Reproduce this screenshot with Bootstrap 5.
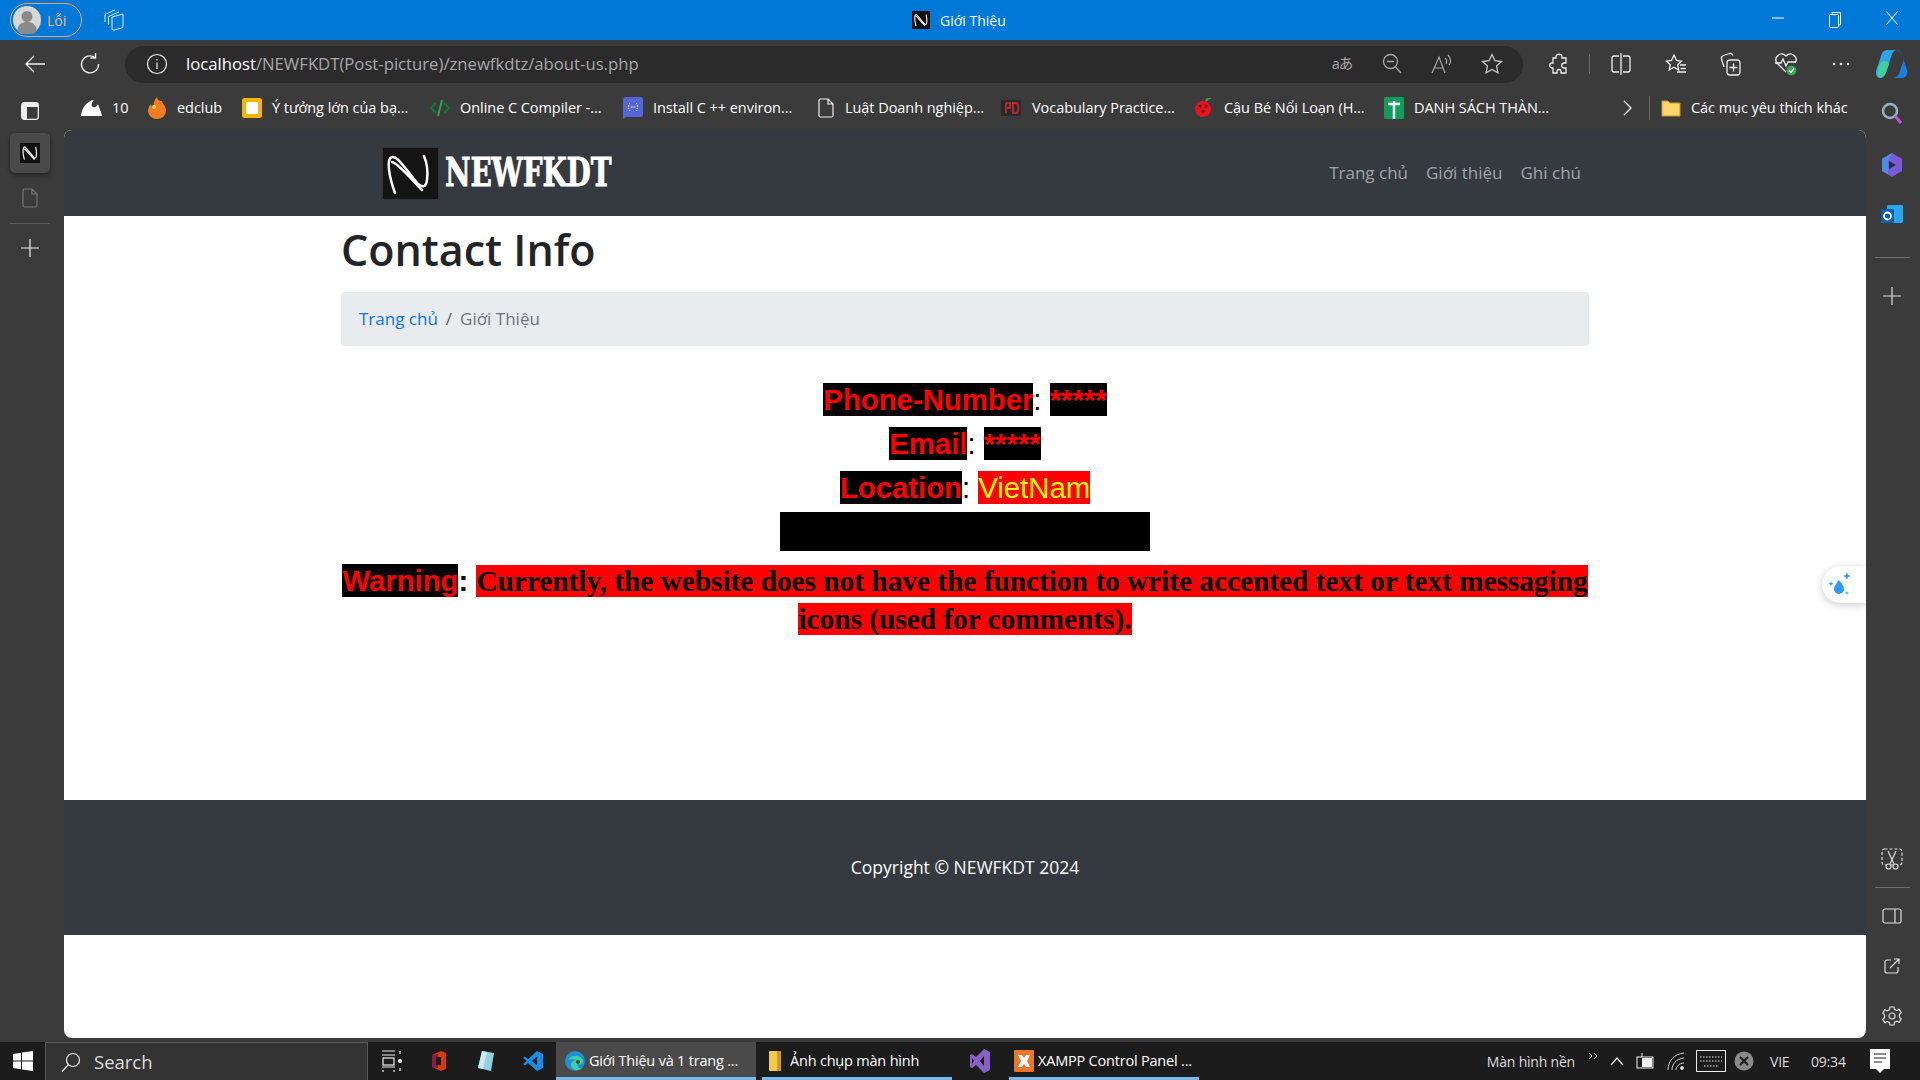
<!DOCTYPE html>
<html lang="vi">

<head>
    <meta charset="utf-8">
    <title>Giới Thiệu</title>
    <link rel="stylesheet" href="https://cdn.jsdelivr.net/npm/bootstrap@5.3.3/dist/css/bootstrap.min.css" />
    <style>
        html, body { height: 100%; overflow: hidden; }
        body { font-family: "Open Sans", "Noto Sans", sans-serif; background: #3b3b3b; color: #fff; }
        svg { display: block; flex: none; }
        .shell { height: 1080px; }

        /* window title */
        .titlebar { height: 40px; background: #0078d7; position: relative; }
        .profile-pill { width: 72px; height: 34px; margin-left: 10px; border: 1px solid #f0a35e; border-radius: 17px; color: #f5b27a; font-size: 14px; gap: 6px; padding-left: 2px; }
        .stack-icon { margin-left: 21px; }
        .title-center { position: absolute; left: 912px; top: 0; height: 40px; font-size: 14px; gap: 10px; }
        .win-btn { width: 57px; }

        /* toolbar */
        .toolbar { height: 48px; padding-left: 7px; }
        .tool-slot { width: 55px; height: 37px; }
        .addr-pill { width: 1398px; height: 37px; margin-left: 8px; margin-right: 8px; background: #2b2b2b; border-radius: 19px; padding: 0 6px 0 20px; font-size: 16.7px; }
        .addr-host { color: #fff; }
        .addr-path { color: #a8a8a8; }
        .addr-text { margin-left: 17px; }
        .addr-slot { width: 50px; }
        .translate-glyph { color: #a8a8a8; font-family: "Open Sans", "Noto Sans CJK JP", sans-serif; font-size: 14.5px; letter-spacing: -1px; }
        .tool-sep { width: 1px; height: 20px; background: #6a6a6a; margin: 0 3px; }
        .copilot-cell { margin-left: 8px; }

        /* middle */
        .mid-row { height: 954px; }
        .side-left { width: 64px; padding: 14px 4px 0 0; }
        .side-tile { width: 40px; height: 40px; background: #4a4a4a; border-radius: 5px; margin: 13px 0 15px; box-shadow: 0 2px 5px rgba(0, 0, 0, .4); }
        .side-rule-l { width: 40px; height: 1px; background: #5c5c5c; margin: 15px 0 15px; }
        .center-col { width: 1802px; }
        .side-right { width: 54px; padding: 14px 2px 16px 0; }
        .side-rule-r { width: 35px; height: 1px; background: #6e6e6e; }
        .rail-copilot { margin-top: 27px; }
        .rail-outlook { margin-top: 27px; }
        .rail-rule-a { margin-top: 31px; }
        .rail-plus { margin-top: 29px; }
        .rail-rule-b { margin: 17px 0 20px; }
        .rail-out { margin-top: 34px; }
        .rail-gear { margin-top: 32px; }

        .bookmarks { height: 42px; padding-bottom: 2px; display: grid; grid-template-columns: 16px 67px 95px 188px 193px 194px 183px 194px 190px 239px 26px 12px 1fr; font-size: 14.5px; letter-spacing: -.05px; align-items: center; }
        .mark-item { gap: 10px; white-space: nowrap; overflow: hidden; }
        .mark-rule { width: 1px; height: 24px; background: #666; }

        /* page inside the browser */
        .web-page { width: 1802px; height: 908px; background: #fff; border-radius: 8px; overflow: hidden; position: relative; color: #212529; }
        .site-bar { height: 86px; background: #343a40; padding: 0 285px 0 318px; }
        .logo-word { display: inline-block; font-family: "DejaVu Serif", serif; font-weight: 700; font-size: 28px; color: #fff; margin-left: 6px; letter-spacing: -.2px; line-height: 1; transform: scaleY(1.4); -webkit-text-stroke: .6px #fff; }
        .site-link { color: rgba(255, 255, 255, .55); font-size: 17px; margin-left: 18px; text-decoration: none; }
        .page-main { height: 584px; width: 1248px; margin-left: 277px; }
        .page-title { font-size: 43px; font-weight: 600; line-height: 1.2; padding-top: 8px; margin: 0 0 16px; color: #212529; }
        .crumb-box { height: 54px; background: #e9ecef; border-radius: 4px; padding: 0 18px; font-size: 17px; }
        .crumb-box .breadcrumb { margin: 0; }
        .crumb-box a { color: #0d6efd; text-decoration: none; }
        .crumb-box .breadcrumb-item.active { color: #6c757d; }
        .contact-info { margin-top: 32px; text-align: center; font-family: "Liberation Sans", Arial, sans-serif; font-size: 29.3px; font-weight: 700; color: #000; }
        .info-line { line-height: 44px; height: 44px; }
        .lab-black { background: #000; color: #f00; }
        .lab-star { background: #000; color: #f00; }
        .lab-place { background: #f00; color: #ff0; font-weight: 400; }
        .sep-colon { font-weight: 400; }
        .black-box { width: 370px; height: 39px; background: #000; margin: 2px auto 11px; }
        .warn-line { line-height: 38px; margin: 0 -4px; }
        .warn-text { background: #f00; color: #000; font-family: "Liberation Serif", "Times New Roman", serif; }
        .site-foot { height: 135px; background: #343a40; color: #fff; font-size: 17.5px; }
        .drop-float { position: absolute; right: 0; top: 436px; width: 44px; height: 37px; background: #fff; border-radius: 19px 0 0 19px; box-shadow: 0 2px 8px rgba(0, 0, 0, .2); padding-left: 5px; }

        /* taskbar */
        .taskbar { height: 38px; background: #1c1c1c; font-size: 14.5px; letter-spacing: -.2px; }
        .start-cell { width: 45px; }
        .search-cell { width: 323px; height: 38px; background: #333; border: 1px solid #5a5a5a; border-bottom: 0; padding-left: 15px; gap: 13px; color: #ddd; font-size: 18.5px; letter-spacing: 0; }
        .task-cell { height: 38px; border-bottom: 3px solid #76b9ed; padding-top: 3px; gap: 4px; white-space: nowrap; }
        .task-edge { width: 200px; background: #4a4a4a; padding-left: 9px; }
        .task-files { width: 190px; margin-left: 6px; padding-left: 7px; gap: 9px; }
        .task-vs { margin: 0 19px 0 18px; }
        .task-xampp { width: 190px; padding-left: 5px; }
        .icon-cell { width: 47px; height: 38px; }
        .tray { margin-left: auto; color: #ddd; font-size: 14px; padding-right: 6px; }
        .tray-g12 { margin-right: 12px; }
        .tray-g11 { margin-right: 11px; }
        .tray-g10 { margin-right: 10px; }
        .tray-vie { width: 41px; }
        .tray-time { width: 59px; }
    </style>
</head>

<body>
    <div class="shell d-flex flex-column">
        <!-- title bar -->
        <div class="titlebar d-flex align-items-center">
            <div class="profile-pill d-flex align-items-center">
                <svg width="28" height="28" viewBox="0 0 28 28"><circle cx="14" cy="14" r="14" fill="#d6d6d6"/><circle cx="14" cy="10.5" r="5.5" fill="#8a8a8a"/><path d="M4 25c1-7 5-9 10-9s9 2 10 9a14 14 0 0 1-20 0z" fill="#8a8a8a"/></svg>
                <span>Lỗi</span>
            </div>
            <svg class="stack-icon" width="22" height="22" viewBox="0 0 22 22" fill="none" stroke="#dcecf9" stroke-width="1"><path d="M9 8l11-3v12c0 1-.5 1.500-1.500 2L11 21c-1.200.3-2-.3-2-1.500z"/><path d="M5.500 16V7.500L16 3M2 13V5.500L12 1"/></svg>
            <div class="title-center d-flex align-items-center">
                <svg width="18" height="18" viewBox="0 0 18 18"><rect width="18" height="18" fill="#111"/><path d="M4 15C2 8 2.500 3.500 4.500 3.500l8.500 10c2 1 2.500-5 1-10M4 5l9 10" fill="none" stroke="#fff" stroke-width="1.100"/></svg>
                <span>Giới Thiệu</span>
            </div>
            <div class="ms-auto d-flex">
                <div class="win-btn d-flex justify-content-center"><svg width="14" height="14" viewBox="0 0 14 14"><path d="M1 7h12" stroke="#fff"/></svg></div>
                <div class="win-btn d-flex justify-content-center"><svg width="14" height="18" viewBox="0 0 14 18" fill="none" stroke="#fff"><rect x="1.5" y="3.5" width="9" height="13" rx="1"/><path d="M4 3V1.5h8.5V14H11"/></svg></div>
                <div class="win-btn d-flex justify-content-center"><svg width="14" height="14" viewBox="0 0 14 14"><path d="M1 0l12 14M13 0L1 14" stroke="#fff"/></svg></div>
            </div>
        </div>

        <!-- toolbar -->
        <div class="toolbar d-flex align-items-center">
            <div class="tool-slot d-flex align-items-center justify-content-center"><svg width="22" height="20" viewBox="0 0 22 20" fill="none" stroke="#eee" stroke-width="1.4"><path d="M21 10H2M10 2l-8 8 8 8"/></svg></div>
            <div class="tool-slot d-flex align-items-center justify-content-center"><svg width="20" height="22" viewBox="0 0 20 22" fill="none" stroke="#eee" stroke-width="1.4"><path d="M15 4.500A8.500 8.500 0 1 0 18.500 11"/><path d="M15.500 0v5h-5"/></svg></div>
            <div class="addr-pill d-flex align-items-center">
                <svg width="24" height="22" viewBox="0 0 24 22" fill="none" stroke="#eee" stroke-width="1.2"><circle cx="12" cy="11" r="9.500"/><path d="M12 9.500V16M12 6v1.500"/></svg>
                <div class="addr-text"><span class="addr-host">localhost</span><span class="addr-path">/NEWFKDT(Post-picture)/znewfkdtz/about-us.php</span></div>
                <div class="ms-auto d-flex align-items-center">
                    <div class="addr-slot d-flex justify-content-center translate-glyph">aあ</div>
                    <div class="addr-slot d-flex justify-content-center"><svg width="20" height="22" viewBox="0 0 20 22" fill="none" stroke="#a8a8a8" stroke-width="1.3"><circle cx="8.500" cy="8.500" r="7"/><path d="M13.500 14l5.500 6M5 8.500h7"/></svg></div>
                    <div class="addr-slot d-flex justify-content-center"><svg width="22" height="20" viewBox="0 0 22 20" fill="none" stroke="#a8a8a8" stroke-width="1.2"><path d="M1 19L8 3l6 16M3.500 14h8.500M14 4c2 1 2 4 1 6M17 1c3 3 3 7 1 10"/></svg></div>
                    <div class="addr-slot d-flex justify-content-center"><svg width="22" height="22" viewBox="0 0 22 22" fill="none" stroke="#c8c8c8" stroke-width="1.3"><path d="M11 1.500l2.900 6.200 6.600.8-4.900 4.600 1.300 6.700L11 16.500l-5.900 3.300 1.300-6.700L1.500 8.500l6.600-.8z"/></svg></div>
                </div>
            </div>
            <div class="tool-slot d-flex align-items-center justify-content-center"><svg width="20" height="22" viewBox="0 0 20 22" fill="none" stroke="#eee" stroke-width="1.3"><path d="M7 3.500c0-3 6-3 6 0V5h4v5h-2c-3 0-3 5 0 5h2v5h-5v-2c0-2-4-2-4 0v2H4v-5H3c-3 0-3-5 0-5h1V5h3z"/></svg></div>
            <div class="tool-sep"></div>
            <div class="tool-slot d-flex align-items-center justify-content-center"><svg width="20" height="22" viewBox="0 0 20 22" fill="none" stroke="#eee" stroke-width="1.3"><path d="M8 3H3a2 2 0 0 0-2 2v12a2 2 0 0 0 2 2h5M12 3h5a2 2 0 0 1 2 2v12a2 2 0 0 1-2 2h-5M10 0v22"/></svg></div>
            <div class="tool-slot d-flex align-items-center justify-content-center"><svg width="22" height="22" viewBox="0 0 22 22" fill="none" stroke="#eee" stroke-width="1.3"><path d="M9 2l2.500 5.500 5 .7-3.800 3.500 1 5.300L9 14.200l-4.700 2.800 1-5.300L1.500 8.200l5-.7zM15 12h6M15.500 15.500H21M12 19h9"/></svg></div>
            <div class="tool-slot d-flex align-items-center justify-content-center"><svg width="22" height="24" viewBox="0 0 22 24" fill="none" stroke="#eee" stroke-width="1.3"><path d="M4 15L1.500 7c-.5-2 .5-3 2-3.500l6-2c2-.5 3 .5 3.500 2"/><rect x="7" y="8" width="13" height="15" rx="3"/><path d="M13.500 11.500v8M9.500 15.500h8"/></svg></div>
            <div class="tool-slot d-flex align-items-center justify-content-center"><svg width="24" height="26" viewBox="0 0 24 26" fill="none" stroke="#eee" stroke-width="1.3"><path d="M12 21L3 12C-1 6 7 0 12 5c5-5 13 1 9 7"/><path d="M1 12h6l2-4 3 7 2-4h8"/><circle cx="17.500" cy="19.500" r="5" fill="#3aa655" stroke="none"/><path d="M15 19.500l2 2 3-4" stroke="#fff"/></svg></div>
            <div class="tool-slot d-flex align-items-center justify-content-center"><svg width="18" height="4" viewBox="0 0 18 4" fill="#eee"><circle cx="2" cy="2" r="1.300"/><circle cx="9" cy="2" r="1.300"/><circle cx="16" cy="2" r="1.300"/></svg></div>
            <div class="copilot-cell d-flex align-items-center"><svg width="32" height="28" viewBox="0 0 32 28"><path d="M12 0h8c-3 1-4 4-5 7l-4 13c-1 4-3 7-7 8-3 0-5-3-4-7l5-15c1-4 3-6 7-6z" fill="#2aa6e6"/><path d="M2 20c0-5 3-9 7-9 2 0 3 1 4 3l-3 8c-1 3-3 6-6 6-2-1-3-4-2-8z" fill="#3fd0a0"/><path d="M20 0c3 0 5 2 6 5l5 15c1 4-1 8-5 8h-8c3-1 5-3 6-7l3-9c1-5-2-11-7-12z" fill="#1b7fe0"/></svg></div>
        </div>

        <!-- left rail, bookmarks + page, right rail -->
        <div class="mid-row d-flex">
            <div class="side-left d-flex flex-column align-items-center">
                <svg width="18" height="18" viewBox="0 0 18 18"><rect x=".7" y=".7" width="16.600" height="16.600" rx="2.500" fill="none" stroke="#eee" stroke-width="1.300"/><rect x="1" y="1" width="16" height="4" fill="#eee"/><rect x="1" y="5" width="5" height="12" fill="#eee"/></svg>
                <div class="side-tile d-flex align-items-center justify-content-center">
                    <svg width="20" height="20" viewBox="0 0 18 18"><rect width="18" height="18" fill="#111"/><path d="M4 15C2 8 2.500 3.500 4.500 3.500l8.500 10c2 1 2.500-5 1-10M4 5l9 10" fill="none" stroke="#eee" stroke-width="1.100"/></svg>
                </div>
                <svg width="16" height="20" viewBox="0 0 16 20" fill="none" stroke="#777" stroke-width="1.200"><path d="M2.500 1H10l5 5v11.500a1.500 1.500 0 0 1-1.500 1.500h-11A1.500 1.500 0 0 1 1 17.500v-15A1.500 1.500 0 0 1 2.500 1zM10 1v5h5"/></svg>
                <div class="side-rule-l"></div>
                <svg width="18" height="18" viewBox="0 0 18 18"><path d="M0 9h18M9 0v18" stroke="#eee" stroke-width="1.200"/></svg>
            </div>

            <div class="center-col">
                <div class="bookmarks">
                    <div></div>
                    <div class="mark-item d-flex align-items-center"><svg width="22" height="18" viewBox="0 0 22 18"><path d="M1 17C2 8 7 2 14 1c-3 3-3 6-1 7 2 1 4-1 5-3 1 4 3 7 4 12z" fill="#fff"/></svg><span>10</span></div>
                    <div class="mark-item d-flex align-items-center"><svg width="20" height="22" viewBox="0 0 20 22"><path d="M10 0c1 4 3 4 5 4 0 2 4 5 4 10a9 8 0 0 1-18 0C1 10 3 8 4 7c0 2 1 3 2 3 1-4 1-7 4-10z" fill="#f47c20"/><circle cx="7" cy="10" r="2" fill="#ffd24a"/></svg><span>edclub</span></div>
                    <div class="mark-item d-flex align-items-center"><svg width="20" height="20" viewBox="0 0 20 20"><rect width="20" height="20" rx="2" fill="#f4b400"/><rect x="4" y="4" width="12" height="12" rx="1" fill="#fff"/></svg><span>Ý tưởng lớn của bạ...</span></div>
                    <div class="mark-item d-flex align-items-center"><svg width="20" height="20" viewBox="0 0 20 20" fill="none" stroke="#0f7b30" stroke-width="1.800"><path d="M6 5l-5 5 5 5M14 5l5 5-5 5"/><path d="M12 2L8 18" stroke="#2fa84f"/></svg><span>Online C Compiler -...</span></div>
                    <div class="mark-item d-flex align-items-center"><svg width="20" height="22" viewBox="0 0 20 22"><path d="M3 0h14a3 3 0 0 1 3 3v14a3 3 0 0 1-3 3H3l-3 2V3a3 3 0 0 1 3-3z" fill="#5865d8"/><path d="M7 6c-2 1-2 7 0 8M13 6c2 1 2 7 0 8M8 10h4" stroke="#fff" fill="none" stroke-dasharray="1.500 1"/></svg><span>Install C ++ environ...</span></div>
                    <div class="mark-item d-flex align-items-center"><svg width="18" height="20" viewBox="0 0 16 20" fill="none" stroke="#eee" stroke-width="1.200"><path d="M2.500 1H10l5 5v11.500a1.500 1.500 0 0 1-1.500 1.500h-11A1.500 1.500 0 0 1 1 17.500v-15A1.500 1.500 0 0 1 2.500 1zM10 1v5h5"/></svg><span>Luật Doanh nghiệp...</span></div>
                    <div class="mark-item d-flex align-items-center"><svg width="22" height="18" viewBox="0 0 22 18"><rect x="1" y="1" width="20" height="16" fill="#2a2a2a"/><path d="M6 4v10M6 4h4v5H6M13 4h3c3 0 3 10 0 10h-3z" fill="none" stroke="#b3262e" stroke-width="2"/></svg><span>Vocabulary Practice...</span></div>
                    <div class="mark-item d-flex align-items-center"><svg width="20" height="20" viewBox="0 0 20 20"><circle cx="9" cy="11" r="8" fill="#e8121f"/><path d="M12 3c1-2 3-3 5-3" stroke="#3aa655" stroke-width="2" fill="none"/><circle cx="6" cy="8" r="1.500" fill="#400"/><circle cx="12" cy="8" r="1.500" fill="#400"/><circle cx="9" cy="13" r="1.500" fill="#400"/></svg><span>Cậu Bé Nổi Loạn (H...</span></div>
                    <div class="mark-item d-flex align-items-center"><svg width="20" height="22" viewBox="0 0 20 22"><rect width="20" height="22" rx="1" fill="#0f9d58"/><path d="M4 7h12M10 4v18" stroke="#fff" stroke-width="2.500"/></svg><span>DANH SÁCH THÀN...</span></div>
                    <div><svg width="10" height="16" viewBox="0 0 10 16" fill="none" stroke="#eee" stroke-width="1.300"><path d="M1 1l7 7-7 7"/></svg></div>
                    <div class="mark-rule"></div>
                    <div class="mark-item d-flex align-items-center"><svg width="20" height="18" viewBox="0 0 20 18"><path d="M1 2h6l2 2h10v13H1z" fill="#ffd66b" stroke="#c9961b"/></svg><span>Các mục yêu thích khác</span></div>
                </div>

                <div class="web-page">
                    <nav class="site-bar d-flex align-items-center">
                        <svg width="57" height="53" viewBox="0 0 57 53"><rect width="57" height="53" fill="#141414"/><rect x=".5" y=".5" width="56" height="52" fill="none" stroke="#333"/><path d="M13 46C7 30 4 11 10 10c4-1 6 2 26 27 5 4 8 3 9-4 1-8 0-17-3-24M10 15c6 1 24 22 30 28" fill="none" stroke="#fff" stroke-width="2.500" stroke-linecap="round"/></svg>
                        <span class="logo-word">NEWFKDT</span>
                        <div class="ms-auto d-flex">
                            <a class="site-link" href="#">Trang chủ</a>
                            <a class="site-link" href="#">Giới thiệu</a>
                            <a class="site-link" href="#">Ghi chú</a>
                        </div>
                    </nav>

                    <main class="page-main">
                        <h1 class="page-title">Contact Info</h1>
                        <div class="crumb-box d-flex align-items-center">
                            <ol class="breadcrumb">
                                <li class="breadcrumb-item"><a href="#">Trang chủ</a></li>
                                <li class="breadcrumb-item active">Giới Thiệu</li>
                            </ol>
                        </div>
                        <div class="contact-info">
                            <div class="info-line"><span class="lab-black">Phone-Number</span><span class="sep-colon">: </span><span class="lab-star">*****</span></div>
                            <div class="info-line"><span class="lab-black">Email</span><span class="sep-colon">: </span><span class="lab-star">*****</span></div>
                            <div class="info-line"><span class="lab-black">Location</span><span class="sep-colon">: </span><span class="lab-place">VietNam</span></div>
                            <div class="black-box"></div>
                            <div class="warn-line"><span class="lab-black">Warning</span>: <span class="warn-text">Currently, the website does not have the function to write accented text or text messaging icons (used for comments).</span></div>
                        </div>
                    </main>

                    <footer class="site-foot d-flex align-items-center justify-content-center">Copyright © NEWFKDT 2024</footer>

                    <div class="drop-float d-flex align-items-center">
                        <svg width="28" height="28" viewBox="0 0 28 28" fill="#2b9af3"><path d="M12 9c3 4 5 6 5 9a5 5 0 0 1-10 0c0-3 2-5 5-9z"/><path d="M20 1l1 3 3 1-3 1-1 3-1-3-3-1 3-1zM4 10l.7 2 2 .7-2 .7-.7 2-.7-2-2-.7 2-.7zM20 20l.5 1.500 1.500.5-1.500.5-.5 1.500-.5-1.500-1.500-.5 1.500-.5z"/></svg>
                    </div>
                </div>
            </div>

            <div class="side-right d-flex flex-column align-items-center">
                <svg width="22" height="24" viewBox="0 0 22 24" fill="none"><circle cx="9" cy="9" r="7" stroke="#8fb3c9" stroke-width="2.500"/><path d="M14 14l6 7" stroke="#c050d8" stroke-width="3"/></svg>
                <svg class="rail-copilot" width="22" height="24" viewBox="0 0 22 24"><path d="M11 0l10 6v12l-10 6L1 18V6z" fill="#7a5bd6"/><path d="M11 0L1 6v12l6 3V8z" fill="#4a8ee8"/><path d="M8 8l7 4-7 4z" fill="#2b2b4a"/></svg>
                <svg class="rail-outlook" width="22" height="22" viewBox="0 0 22 22"><rect x="6" y="1" width="16" height="18" rx="1" fill="#28a8ea"/><rect y="5" width="13" height="14" rx="1" fill="#0a5fb0"/><circle cx="6.500" cy="12" r="3.500" fill="none" stroke="#fff" stroke-width="1.800"/></svg>
                <div class="side-rule-r rail-rule-a"></div>
                <svg class="rail-plus" width="18" height="18" viewBox="0 0 18 18"><path d="M0 9h18M9 0v18" stroke="#ddd" stroke-width="1.200"/></svg>

                <svg class="mt-auto" width="22" height="22" viewBox="0 0 22 22" fill="none" stroke="#ddd" stroke-width="1.200"><rect x="1" y="1" width="20" height="16" rx="2.500" stroke-dasharray="3 2"/><path d="M7 3l6 13M15 3L9 16"/><circle cx="7.500" cy="18.500" r="2.500" fill="#3b3b3b"/><circle cx="14.500" cy="18.500" r="2.500" fill="#3b3b3b"/></svg>
                <div class="side-rule-r rail-rule-b"></div>
                <svg width="20" height="16" viewBox="0 0 20 16" fill="none" stroke="#ddd" stroke-width="1.200"><rect x="1" y="1" width="18" height="14" rx="2"/><path d="M13 1v14"/></svg>
                <svg class="rail-out" width="16" height="16" viewBox="0 0 16 16" fill="none" stroke="#ddd" stroke-width="1.200"><path d="M7 2H3a2 2 0 0 0-2 2v9a2 2 0 0 0 2 2h9a2 2 0 0 0 2-2V9M6 10l9-9M10 1h5v5"/></svg>
                <svg class="rail-gear" width="20" height="20" viewBox="0 0 20 20" fill="none" stroke="#ddd" stroke-width="1.200"><circle cx="10" cy="10" r="3"/><path d="M8 1h4l.6 2.500 2.400 1 2.200-1.300 2 3.500-1.800 1.800v2.600l1.800 1.800-2 3.500-2.200-1.300-2.400 1L12 19H8l-.6-2.500-2.400-1-2.200 1.300-2-3.500 1.800-1.800V8.900L.8 7.100l2-3.500L5 4.900l2.400-1z"/></svg>
            </div>
        </div>

        <!-- windows taskbar -->
        <div class="taskbar d-flex align-items-center">
            <div class="start-cell d-flex justify-content-center"><svg width="20" height="20" viewBox="0 0 20 20" fill="#fff"><path d="M0 3l8-1.200V9.500H0zM9 1.600L20 0v9.500H9zM0 10.500h8v7.700L0 17zM9 10.500h11V20L9 18.400z"/></svg></div>
            <div class="search-cell d-flex align-items-center">
                <svg width="20" height="20" viewBox="0 0 20 20" fill="none" stroke="#eee" stroke-width="1.200"><circle cx="12" cy="8" r="6.500"/><path d="M7.500 12.500L1 19.500"/></svg>
                <span>Search</span>
            </div>
            <div class="icon-cell d-flex align-items-center justify-content-center"><svg width="20" height="22" viewBox="0 0 20 22" fill="none" stroke="#eee" stroke-width="1.200"><path d="M0 1h13M0 5h13M0 17h13M1 20v2M12 20v2"/><rect x="1" y="8" width="11" height="7"/><circle cx="18" cy="11" r="1.500" fill="#eee"/><path d="M18 1v3M18 18v3"/></svg></div>
            <div class="icon-cell d-flex align-items-center justify-content-center"><svg width="16" height="20" viewBox="0 0 16 20"><path d="M1 4l9-4 5 2v16l-5 2-9-4z" fill="#d83b01"/><path d="M1 4l6-1v14l-6-1z" fill="#8b1a4a"/><path d="M5 6h5v8H5z" fill="#1c1c1c"/></svg></div>
            <div class="icon-cell d-flex align-items-center justify-content-center"><svg width="18" height="22" viewBox="0 0 18 22"><path d="M5 1l12 2-3 18L1 18z" fill="#8fd4e0"/><path d="M5 1l5 1-4 17-5-1z" fill="#c8ecf0"/></svg></div>
            <div class="icon-cell d-flex align-items-center justify-content-center"><svg width="20" height="20" viewBox="0 0 20 20"><path d="M14 0l6 3v14l-6 3L5 12l-3 2.500L0 13l3.500-3L0 7l2-1.500L5 8zm0 5.500L9 10l5 4.500z" fill="#1c8ce8" fill-rule="evenodd"/></svg></div>
            <div class="task-cell task-edge d-flex align-items-center">
                <svg width="20" height="20" viewBox="0 0 20 20"><circle cx="10" cy="10" r="10" fill="#1f8fd8"/><path d="M3 9c2-5 12-6 15 0 1 3-2 5-5 4-2 2 1 5 4 4-4 4-11 2-11-3 0-3 3-5 6-5-3-1-7-1-9 0z" fill="#3ed1a0"/><circle cx="13" cy="11" r="2" fill="#4a4a4a"/></svg>
                <span>Giới Thiệu và 1 trang ...</span>
            </div>
            <div class="task-cell task-files d-flex align-items-center">
                <svg width="12" height="20" viewBox="0 0 12 20"><rect width="12" height="20" rx="1" fill="#f2c94c"/><rect x="8" width="4" height="20" fill="#c99b2a"/></svg>
                <span>Ảnh chụp màn hình</span>
            </div>
            <div class="task-vs d-flex align-items-center"><svg width="20" height="24" viewBox="0 0 20 24"><path d="M14 0l6 3v18l-6 3-8-8-4 3-2-1V6l2-1 4 3zm0 7l-4 5 4 5zM2 9v6l2-3z" fill="#8661c5" fill-rule="evenodd"/></svg></div>
            <div class="task-cell task-xampp d-flex align-items-center">
                <svg width="20" height="22" viewBox="0 0 20 22"><rect width="20" height="22" rx="1" fill="#e8762b"/><path d="M4 5h4l2 3 2-3h4l-3 6 3 6h-4l-2-3-2 3H4l3-6z" fill="#fff"/></svg>
                <span>XAMPP Control Panel ...</span>
            </div>
            <div class="tray d-flex align-items-center">
                <span class="tray-g12">Màn hình nền</span>
                <svg class="tray-g11" width="12" height="18" viewBox="0 0 12 18" fill="none" stroke="#eee"><path d="M2 1l3 3-3 3M7 1l3 3-3 3"/></svg>
                <svg class="tray-g12" width="14" height="10" viewBox="0 0 14 10" fill="none" stroke="#eee" stroke-width="1.200"><path d="M1 9l6-7 6 7"/></svg>
                <svg class="tray-g12" width="18" height="16" viewBox="0 0 18 16"><rect x="1" y="4" width="16" height="11" fill="none" stroke="#eee"/><rect x="6" y="5" width="10" height="9" fill="#eee"/><path d="M6 0v4" stroke="#eee"/></svg>
                <svg class="tray-g10" width="20" height="20" viewBox="0 0 20 20" fill="none" stroke="#ccc"><path d="M2 19C2 10 8 3 18 2M6 19c0-6 4-11 12-12M10 19c0-3 3-7 8-7"/><circle cx="16" cy="17" r="1.500" fill="#eee"/></svg>
                <svg class="me-2" width="30" height="22" viewBox="0 0 30 22" fill="none" stroke="#eee"><rect x=".5" y=".5" width="29" height="21"/><path d="M4 7h22M4 11h22M8 16h14" stroke-dasharray="1.500 1.500"/></svg>
                <svg class="me-3" width="20" height="20" viewBox="0 0 20 20"><circle cx="10" cy="10" r="9.500" fill="#8a8a8a"/><path d="M6 6l8 8M14 6l-8 8" stroke="#1c1c1c" stroke-width="2"/></svg>
                <span class="tray-vie">VIE</span>
                <span class="tray-time">09:34</span>
                <svg class="me-4" width="20" height="24" viewBox="0 0 20 24"><path d="M0 0h20v20h-6l-4 4-4-4H0z" fill="#fff"/><path d="M4 5h12M4 9h12M4 13h8" stroke="#1c1c1c"/></svg>
            </div>
        </div>
    </div>
</body>

</html>
